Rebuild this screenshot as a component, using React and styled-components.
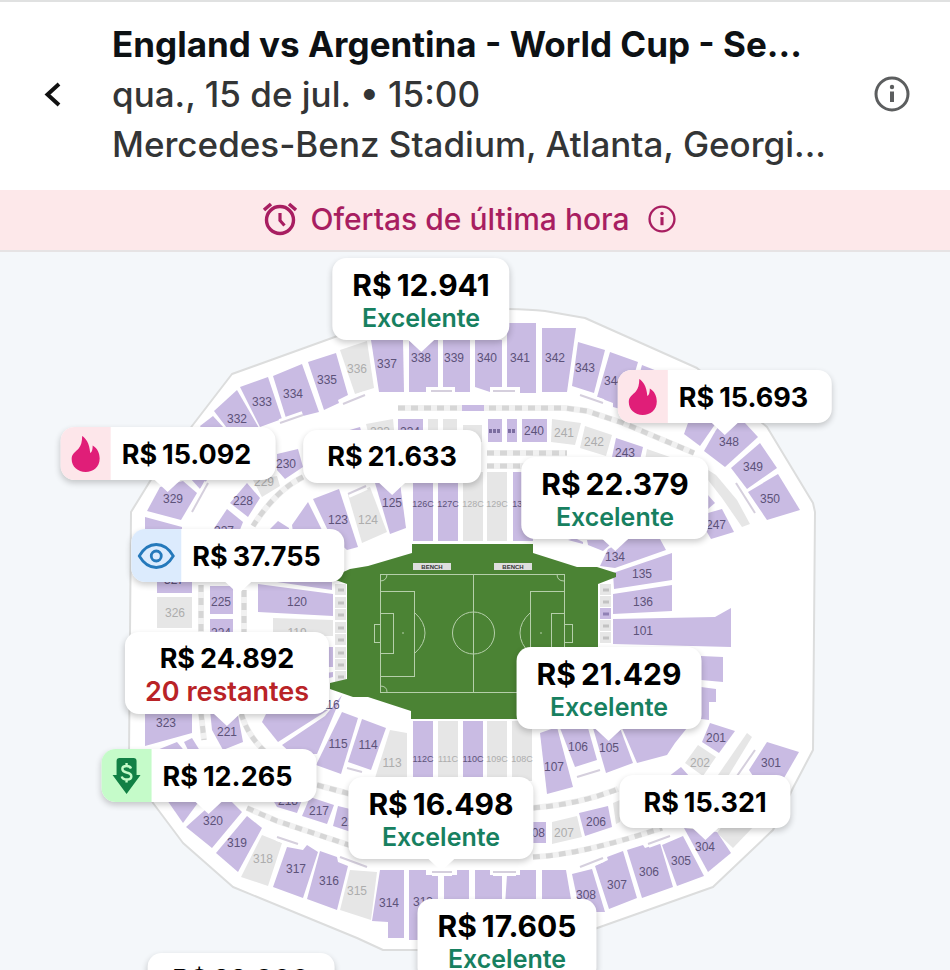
import React from 'react';
import styled, { createGlobalStyle } from 'styled-components';

const STAGE_WIDTH = 950;
const STAGE_HEIGHT = 718;
const STAGE_TOP = 252;

const AVAILABLE_COLOR = '#c9bbe3';
const SOLD_OUT_COLOR = '#e6e6e6';
const MAGENTA_COLOR = '#a81e61';
const GREEN_TEXT_COLOR = '#178060';
const RED_TEXT_COLOR = '#b92327';

const GlobalStyle = createGlobalStyle`
  * {
    box-sizing: border-box;
  }

  body {
    margin: 0;
    background: #f4f7fa;
    font-family: Inter, 'Liberation Sans', sans-serif;
  }
`;

const Page = styled.div`
  display: flex;
  flex-direction: column;
  height: 100vh;
  overflow: hidden;
`;

const Header = styled.header`
  display: flex;
  align-items: center;
  gap: 40px;
  padding: 17px 40px 21px 32px;
  background: #fff;
  border-top: 2px solid #e0e1e1;
`;

const IconButton = styled.button`
  display: flex;
  align-items: center;
  justify-content: center;
  flex: none;
  width: ${({ size }) => size}px;
  height: ${({ size }) => size}px;
  padding: 0;
  border: 0;
  background: none;
  color: ${({ color }) => color};
  cursor: pointer;
`;

const EventInfo = styled.div`
  flex: 1;
  min-width: 0;
`;

const Title = styled.h1`
  margin: 0;
  color: #0d1114;
  font-weight: 700;
  font-size: 35px;
  line-height: 50px;
  white-space: nowrap;
`;

const Detail = styled.p`
  margin: 0;
  color: #333536;
  font-weight: 450;
  font-size: 35px;
  line-height: 50px;
  white-space: nowrap;
`;

const Banner = styled.div`
  display: flex;
  align-items: center;
  justify-content: center;
  gap: 12px;
  height: 62px;
  flex: none;
  padding: 0 12px 2px 0;
  background: #fde8ea;
  border-bottom: 2px solid #e6e3e4;
  color: ${MAGENTA_COLOR};
`;

const BannerText = styled.span`
  margin-right: 6px;
  font-weight: 450;
  font-size: 30px;
  line-height: 40px;
`;

const MapArea = styled.main`
  flex: 1;
  min-height: 0;
  overflow: hidden;
`;

const Stage = styled.div`
  position: relative;
  width: 100%;
  aspect-ratio: ${STAGE_WIDTH} / ${STAGE_HEIGHT};
`;

const StadiumSvg = styled.svg`
  display: block;
  width: 100%;
  height: 100%;
`;

const SectionLabel = styled.text`
  font-family: 'Liberation Sans', sans-serif;
  font-size: ${({ $small }) => ($small ? 9 : 12)}px;
  text-anchor: middle;
  fill: ${({ $soldOut }) => ($soldOut ? '#adadad' : '#5c5279')};
`;

const BenchLabel = styled.text`
  font-family: 'Liberation Sans', sans-serif;
  font-size: 6px;
  font-weight: 700;
  text-anchor: middle;
  fill: #333;
`;

const Pin = styled.button`
  position: absolute;
  display: flex;
  align-items: center;
  min-height: 53px;
  padding: 0;
  border: 0;
  border-radius: 14px;
  background: #fff;
  box-shadow: 0 3px 6px rgba(0, 0, 0, 0.2);
  color: #000;
  font-family: inherit;
  white-space: nowrap;
  cursor: pointer;
  transform: translate(-50%, calc(-100% - 12px));

  &::after {
    content: '';
    position: absolute;
    top: calc(100% - 1px);
    left: calc(50% - 14px);
    border: 14px solid transparent;
    border-top: 13px solid #fff;
    border-bottom: 0;
  }
`;

const PinTab = styled.span`
  display: flex;
  align-items: center;
  justify-content: center;
  align-self: stretch;
  width: 50px;
  border-radius: 14px 0 0 14px;
  background: ${({ $background }) => $background};
`;

const PinBody = styled.span`
  display: flex;
  flex-direction: column;
  align-items: center;
  padding: ${({ $icon, $note }) => {
    if ($icon) return '2px 24px 0 11px';
    return $note ? '9px 20px 7px' : '2px 24px 0';
  }};
`;

const Price = styled.span`
  display: flex;
  gap: 5px;
  font-weight: 700;
  font-size: ${({ $large }) => ($large ? 30 : 27)}px;
  line-height: 36px;
`;

const Note = styled.span`
  color: ${({ $urgent }) => ($urgent ? RED_TEXT_COLOR : GREEN_TEXT_COLOR)};
  font-weight: 600;
  font-size: ${({ $urgent }) => ($urgent ? 27 : 25)}px;
  line-height: 30px;
`;

// [points, label, label x, label y, sold out]
const SECTIONS = [
  ['200,426 213,416 235,440 215,450'],
  ['214,411 237,390 259,428 252,440 236,440', '332', 237, 423],
  ['240,387 268,377 282,419 260,427', '333', 262, 406],
  ['273,376 302,364 319,412 303,416 301,413 286,418', '334', 293, 398],
  ['308,362 336,353 348,395 338,400 339,403 324,410', '335', 327, 384],
  ['340,350 367,341 374,388 355,394', '336', 357, 373, true],
  ['371,340 403,340 404,392 379,392', '337', 387, 368],
  ['409,340 438,340 438,387 426,387 426,392 409,392', '338', 421, 362],
  ['443,340 470,340 470,392 455,392 455,387 443,387', '339', 454, 362],
  ['475,340 502,340 502,387 490,387 490,392 475,387', '340', 487, 362],
  ['507,323 536,323 536,393 520,393 520,387 507,387', '341', 520, 362],
  ['542,328 576,328 567,392 542,392', '342', 555, 362],
  ['578,342 605,350 594,393 572,386', '343', 585, 372],
  ['610,352 638,362 624,410 613,407 613,403 597,397', '344', 614, 385],
  ['642,365 680,380 665,420 630,410'],
  ['688,423 716,423 700,446 684,434'],
  ['716,430 722,423 745,423 758,437 725,467 704,451', '348', 729, 446],
  ['760,443 777,468 747,489 731,468', '349', 753, 471],
  ['778,474 800,510 767,520 748,492', '350', 770, 503],
  ['708,495 715,503 708,509'],
  ['700,520 708,513 722,509 734,532 711,539', '247', 716, 529],
  ['346,431 360,427 362,434 346,434'],
  ['366,424 393,419 395,440 370,440', '233', 380, 436, true],
  ['398,419 423,419 423,442 398,442', '234', 410, 436],
  ['428,419 438,419 438,442 428,442', '', 0, 0, true],
  ['443,419 457,419 457,442 443,442', '', 0, 0, true],
  ['463,425 482,425 482,442 463,442', '', 0, 0, true],
  ['488,419 502,419 502,442 488,442'],
  ['507,419 517,419 517,442 507,442'],
  ['522,419 547,419 547,442 522,442', '240', 534, 435],
  ['552,419 581,423 575,445 551,442', '241', 564, 437, true],
  ['585,426 612,435 606,456 580,448', '242', 594, 446, true],
  ['616,438 643,447 640,460 612,457', '243', 625, 457],
  ['647,449 670,457 668,465 645,460', '', 0, 0, true],
  ['277,454 298,449 303,467 285,479 277,470', '230', 286, 468],
  ['253,480 277,476 280,486 262,497', '229', 264, 486, true],
  ['247,483 260,498 248,517 230,503', '228', 243, 505],
  ['227,509 243,522 238,535 213,530', '227', 224, 535],
  ['160,487 183,481 197,493 181,520 147,511', '329', 173, 503],
  ['190,478 207,480 200,489'],
  ['145,517 182,527 182,545 145,545'],
  ['157,570 192,570 192,593 157,593', '327', 174, 584],
  ['157,597 192,597 192,628 157,628', '326', 175, 617, true],
  ['210,586 233,586 233,614 210,614', '225', 221, 606],
  ['210,619 233,619 233,640 210,640', '224', 221, 637],
  ['269,530 278,521 289,528 289,535'],
  ['292,525 308,502 323,532 293,532'],
  ['313,499 339,489 358,547 347,550 330,535', '123', 338, 524],
  ['348,495 370,487 387,532 362,543', '124', 368, 524, true],
  ['375,483 400,483 406,528 390,534', '125', 392, 507],
  ['277,582 332,582 332,590'],
  ['258,584 333,594 333,616 258,612', '120', 297, 606],
  ['273,618 333,620 333,636 273,636', '119', 297, 637, true],
  ['325,647 333,647 333,667 325,667'],
  ['325,673 333,672 333,677 325,679'],
  ['575,538 583,542 583,544 568,540'],
  ['587,540 607,540 610,545 603,551 588,545'],
  ['608,549 628,539 660,539 666,550 615,568 600,566', '134', 615, 561],
  ['672,553 672,580 614,589 613,573', '135', 642, 578],
  ['672,585 672,611 613,614 613,594', '136', 643, 606],
  ['613,619 715,617 731,608 731,647 613,644', '101', 643, 635],
  ['701,656 723,657 723,682 701,680'],
  ['701,687 716,689 716,702 709,702 709,720 701,719'],
  ['710,723 735,731 719,753 702,742', '201', 716, 742],
  ['698,745 716,757 703,776 685,763', '202', 700, 767, true],
  ['681,767 690,777 668,777'],
  ['767,742 799,752 784,778 753,776 749,770', '301', 771, 767],
  ['717,833 723,825 755,825 733,848', '', 0, 0, true],
  ['684,828 717,832 731,853 708,872', '304', 705, 851],
  ['662,845 683,836 704,876 677,886', '305', 681, 865],
  ['627,850 643,845 645,848 660,843 673,887 642,898', '306', 649, 876],
  ['595,866 608,860 607,857 623,851 637,898 609,909', '307', 617, 889],
  ['572,874 592,869 605,912 580,912', '308', 586, 899],
  ['542,870 566,870 572,905 542,905'],
  ['507,875 520,875 520,870 536,870 536,905 505,905'],
  ['475,870 490,870 490,875 502,875 502,905 475,905'],
  ['444,875 457,875 457,870 469,870 469,905 444,905'],
  ['409,870 426,870 426,875 438,875 438,940 409,940', '313', 423, 906],
  ['380,870 404,870 404,938 388,938 388,922 372,921', '314', 389, 907],
  ['350,870 377,872 371,920 340,910', '315', 357, 895, true],
  ['320,851 337,857 338,862 348,866 337,910 307,899', '316', 329, 885],
  ['287,847 303,850 307,845 318,852 303,898 273,887', '317', 296, 873],
  ['262,835 282,843 268,886 241,877', '318', 263, 863, true],
  ['247,816 262,828 238,872 216,853', '319', 237, 847],
  ['205,800 230,800 242,812 212,848 186,827 205,810', '320', 213, 825],
  ['167,800 200,800 183,823'],
  ['145,710 192,710 192,733 145,746', '323', 166, 727],
  ['157,750 177,742 187,754 160,756'],
  ['184,742 192,738 202,754 190,754'],
  ['210,710 237,710 243,742 223,750 212,730', '221', 227, 736],
  ['273,800 302,800 297,813 277,807', '218', 288, 805],
  ['310,797 334,805 327,824 302,816', '217', 319, 815],
  ['338,806 354,810 354,833 333,826', '216', 351, 826],
  ['282,745 325,716 342,695 317,754 292,754', '116', 330, 709],
  ['262,722 268,710 328,710 278,742'],
  ['342,712 358,718 341,774 316,765', '115', 338, 748],
  ['362,719 386,728 371,770 348,762', '114', 368, 749],
  ['390,730 407,733 407,780 375,778', '113', 392, 767, true],
  ['540,733 557,727 573,787 547,794', '107', 554, 771],
  ['560,728 588,728 597,760 575,767', '106', 578, 751],
  ['593,728 620,728 633,763 606,773', '105', 609, 752],
  ['622,728 687,728 675,743 667,755 637,763'],
  ['579,813 608,806 612,827 585,836', '206', 596, 826],
  ['552,822 577,816 582,837 552,844', '207', 564, 837, true],
  ['530,822 546,822 546,843 530,843', '208', 535, 837],
  ['613,803 620,800 620,822 616,824', '', 0, 0, true],
  ['708,470 716,475 737,500 750,524 742,527 722,498 708,480', '', 0, 0, true],
  ['747,733 752,737 727,778 718,775', '', 0, 0, true],
];

// club rows above and below the pitch: [x, label, sold out]
const UPPER_CLUB = [
  [413, '126C'],
  [438, '127C'],
  [463, '128C', true],
  [487, '129C', true],
  [513, '130C'],
];

const LOWER_CLUB = [
  [413, '112C'],
  [438, '111C', true],
  [463, '110C'],
  [487, '109C', true],
  [512, '108C', true],
];

const SUITE_ROWS = [
  'M398 408H565L587 411L623 423L694 453',
  'M487 453H567',
  'M487 466H524',
  'M303 477Q276 490 253 526',
  'M201 585V638',
  'M201 713L204 740',
  'M244 590V638',
  'M241 713Q248 738 270 756',
  'M317 785L354 795',
  'M247 808L277 821L352 846',
  'M533 808Q580 804 618 789',
  'M533 857Q580 855 662 828',
];

const LEDGES = [
  'M431 391H452',
  'M493 391H515',
  'M580 395L603 403',
  'M343 404L365 395',
  'M280 423L303 415',
  'M736 483L755 513',
  'M208 483L192 512',
  'M755 750L737 776',
  'M432 872H452',
  'M493 872H516',
  'M580 867L603 858',
  'M648 844L670 836',
  'M277 837L298 844',
  'M340 857L367 867',
  'M348 494L366 486',
  'M347 768L362 772',
  'M577 777L600 770',
];

const SIDE_SEATS = [
  ...[584, 597, 609, 622, 634, 647, 659, 671].map((y) => ({ x: 335, y })),
  ...[584, 596, 608, 620, 632].map((y) => ({ x: 600, y, available: y === 608 })),
];

// x / y is the spot that the pointer touches
const PINS = [
  { x: 421, y: 352, price: '12.941', note: 'Excelente' },
  { x: 725, y: 435, price: '15.693', icon: 'flame' },
  { x: 168, y: 492, price: '15.092', icon: 'flame' },
  { x: 392, y: 495, price: '21.633' },
  { x: 615, y: 551, price: '22.379', note: 'Excelente' },
  { x: 238, y: 594, price: '37.755', icon: 'eye' },
  { x: 227, y: 726, price: '24.892', note: '20 restantes', urgent: true },
  { x: 609, y: 741, price: '21.429', note: 'Excelente' },
  { x: 209, y: 814, price: '12.265', icon: 'deal' },
  { x: 705, y: 840, price: '15.321' },
  { x: 441, y: 871, price: '16.498', note: 'Excelente' },
  { x: 507, y: 993, price: '17.605', note: 'Excelente' },
  { x: 241, y: 1047, price: '22.900', note: '9 restantes', urgent: true },
];

const TAB_COLORS = {
  flame: '#fde6ea',
  eye: '#dcebfd',
  deal: '#c5fbc9',
};

const BackIcon = () => (
  <svg width="40" height="40" viewBox="0 0 40 40" fill="none">
    <path d="M27 10L15.500 20.500L27 31" stroke="#111" strokeWidth="4" />
  </svg>
);

const InfoIcon = ({ size, strokeWidth }) => (
  <svg width={size} height={size} viewBox="0 0 36 36" fill="none">
    <circle cx="18" cy="18" r="16" stroke="currentColor" strokeWidth={strokeWidth} />
    <path d="M18 15.500V26" stroke="currentColor" strokeWidth="4" />
    <circle cx="18" cy="11" r="2.200" fill="currentColor" />
  </svg>
);

const AlarmIcon = () => (
  <svg width="36" height="36" viewBox="0 0 36 36" fill="none" stroke={MAGENTA_COLOR}>
    <circle cx="18" cy="19" r="13.500" strokeWidth="3.400" />
    <path d="M2 9L9 3M34 9L27 3" strokeWidth="3.600" />
    <path d="M18 12V19.500L22.500 24.500" strokeWidth="3.200" />
  </svg>
);

const FlameIcon = () => (
  <svg width="30" height="38" viewBox="0 0 30 38">
    <path
      d="M11.500 1C14.500 2.500 19 8 19.500 18C21.500 17 22 14 22 10.500C27 13.500 29 18.500 29 23.500C29 32 22.500 37 15 37C7 37 1 31.500 1 24C1 18.500 5 17 8 13.500C10.500 10.500 11.500 6.500 11.500 1Z"
      fill="#e01e78"
    />
  </svg>
);

const EyeIcon = () => (
  <svg width="38" height="28" viewBox="0 0 38 28" fill="none" stroke="#2579bb" strokeWidth="2.800">
    <path d="M2 14C7 5.500 12.500 2.500 19 2.500S31 5.500 36 14C31 22.500 25.500 25.500 19 25.500S7 22.500 2 14Z" />
    <circle cx="19" cy="14" r="5" />
  </svg>
);

const DealIcon = () => (
  <svg width="30" height="38" viewBox="0 0 30 38">
    <path d="M5 4Q5 1 8 1H22Q25 1 25 4V18H29L15 37L1 18H5Z" fill="#128045" />
    <path
      d="M19.500 11.500Q18.500 9 15 9Q10.800 9 10.800 12Q10.800 14.500 15 15.500Q19.800 16.500 19.800 19.500Q19.800 22.500 15.300 22.500Q11 22.500 10.200 19.500M15 6V9M15 22.500V25.500"
      fill="none"
      stroke="#c5fbc9"
      strokeWidth="2.400"
    />
  </svg>
);

const PIN_ICONS = {
  flame: FlameIcon,
  eye: EyeIcon,
  deal: DealIcon,
};

const Pitch = () => (
  <g>
    <path
      d="M412 544H533V553L577 567L597 567L616 573V577L598 584V690L533 711V719H411V711L368 697H353L330 689V683L347 679V584L330 578L350 569L368 566L412 553Z"
      fill="#4b8334"
    />
    <g fill="none" stroke="#b5cfaa" strokeWidth="1">
      <rect x="380.500" y="574.500" width="184" height="118" />
      <path d="M473.500 574V692" />
      <circle cx="473.500" cy="633" r="21" />
      <rect x="380.500" y="591.500" width="34" height="85" />
      <rect x="380.500" y="613.500" width="13" height="40" />
      <rect x="374.500" y="624.500" width="6" height="18" />
      <path d="M415 613Q425 622 425 633T415 653" />
      <rect x="530.500" y="591.500" width="34" height="85" />
      <rect x="551.500" y="613.500" width="13" height="40" />
      <rect x="564.500" y="624.500" width="8" height="18" />
      <path d="M530 613Q520 622 520 633T530 653" />
      <path d="M387 574Q387 581 380 581M557 574Q557 581 564 581M387 692Q387 686 380 686" />
      <path d="M402 633H404M540 633H542" />
    </g>
    {[413, 494].map((x) => (
      <g key={x}>
        <rect x={x} y="563" width="38" height="7" fill="#dedede" />
        <BenchLabel x={x + 19} y="569">BENCH</BenchLabel>
      </g>
    ))}
  </g>
);

const ClubRow = ({ blocks, top, height, labelY }) => blocks.map(([x, label, soldOut]) => (
  <g key={label}>
    <rect x={x} y={top} width="20" height={height} fill={soldOut ? SOLD_OUT_COLOR : AVAILABLE_COLOR} />
    <SectionLabel x={x + 10} y={labelY} $small $soldOut={soldOut}>{label}</SectionLabel>
  </g>
));

const Stadium = () => (
  <StadiumSvg viewBox={`0 ${STAGE_TOP} ${STAGE_WIDTH} ${STAGE_HEIGHT}`}>
    <path
      d="M131 512L152 478L232 374L332 338L400 313Q500 306 545 311L585 318L697 368L767 427L813 503L815 512L813 750L793 788L773 830L713 887L600 927Q540 950 500 950H383L357 938L233 887L183 843L153 803L129 755Z"
      fill="#fff"
      stroke="#dcdddd"
      strokeWidth="2"
      strokeLinejoin="round"
    />
    {SECTIONS.map(([points, label, x, y, soldOut]) => (
      <g key={points}>
        <polygon points={points} fill={soldOut ? SOLD_OUT_COLOR : AVAILABLE_COLOR} />
        {label && <SectionLabel x={x} y={y} $soldOut={soldOut}>{label}</SectionLabel>}
      </g>
    ))}
    <ClubRow blocks={UPPER_CLUB} top={472} height={69} labelY={507} />
    <ClubRow blocks={LOWER_CLUB} top={721} height={60} labelY={762} />
    {SUITE_ROWS.map((d) => (
      <g key={d} fill="none">
        <path d={d} stroke="#f1f1f1" strokeWidth="6" />
        <path d={d} stroke="#d6d6d6" strokeWidth="5" strokeDasharray="7 6" />
      </g>
    ))}
    <rect x="462" y="405" width="22" height="6" fill={AVAILABLE_COLOR} />
    {LEDGES.map((d) => (
      <g key={d} fill="none">
        <path d={d} stroke="#fff" strokeWidth="8" />
        <path d={d} stroke="#d5cfdd" strokeWidth="2" />
      </g>
    ))}
    {SIDE_SEATS.map(({ x, y, available }) => (
      <g key={`${x}-${y}`}>
        <rect x={x} y={y} width="11" height="11" fill={available ? AVAILABLE_COLOR : SOLD_OUT_COLOR} />
        <path d={`M${x + 3} ${y + 6}H${x + 9}`} stroke={available ? '#9081b5' : '#c2c2c2'} strokeWidth="3" />
      </g>
    ))}
    <path d="M489 431H501M508 431H516" stroke="#7b6da0" strokeWidth="4" strokeDasharray="3 1" />
    <Pitch />
  </StadiumSvg>
);

const PricePin = ({ x, y, price, note, urgent, icon }) => {
  const Icon = PIN_ICONS[icon];
  const position = {
    left: `${(x / STAGE_WIDTH) * 100}%`,
    top: `${((y - STAGE_TOP) / STAGE_HEIGHT) * 100}%`,
  };

  return (
    <Pin type="button" style={position}>
      {Icon && <PinTab $background={TAB_COLORS[icon]}><Icon /></PinTab>}
      <PinBody $icon={icon} $note={note}>
        <Price $large={note && !urgent}>
          <span>R$</span>
          {' '}
          <span>{price}</span>
        </Price>
        {note && <Note $urgent={urgent}>{note}</Note>}
      </PinBody>
    </Pin>
  );
};

const App = () => (
  <Page>
    <GlobalStyle />
    <Header>
      <IconButton type="button" size={40} color="#111" aria-label="Voltar">
        <BackIcon />
      </IconButton>
      <EventInfo>
        <Title>England vs Argentina - World Cup - Se...</Title>
        <Detail>qua., 15 de jul. • 15:00</Detail>
        <Detail>Mercedes-Benz Stadium, Atlanta, Georgi...</Detail>
      </EventInfo>
      <IconButton type="button" size={36} color="#5c5e5f" aria-label="Informações do evento">
        <InfoIcon size={36} strokeWidth={3} />
      </IconButton>
    </Header>
    <Banner>
      <AlarmIcon />
      <BannerText>Ofertas de última hora</BannerText>
      <IconButton type="button" size={28} color={MAGENTA_COLOR} aria-label="Sobre as ofertas">
        <InfoIcon size={28} strokeWidth={3} />
      </IconButton>
    </Banner>
    <MapArea>
      <Stage>
        <Stadium />
        {PINS.map((pin) => <PricePin key={pin.price} {...pin} />)}
      </Stage>
    </MapArea>
  </Page>
);

export default App;
